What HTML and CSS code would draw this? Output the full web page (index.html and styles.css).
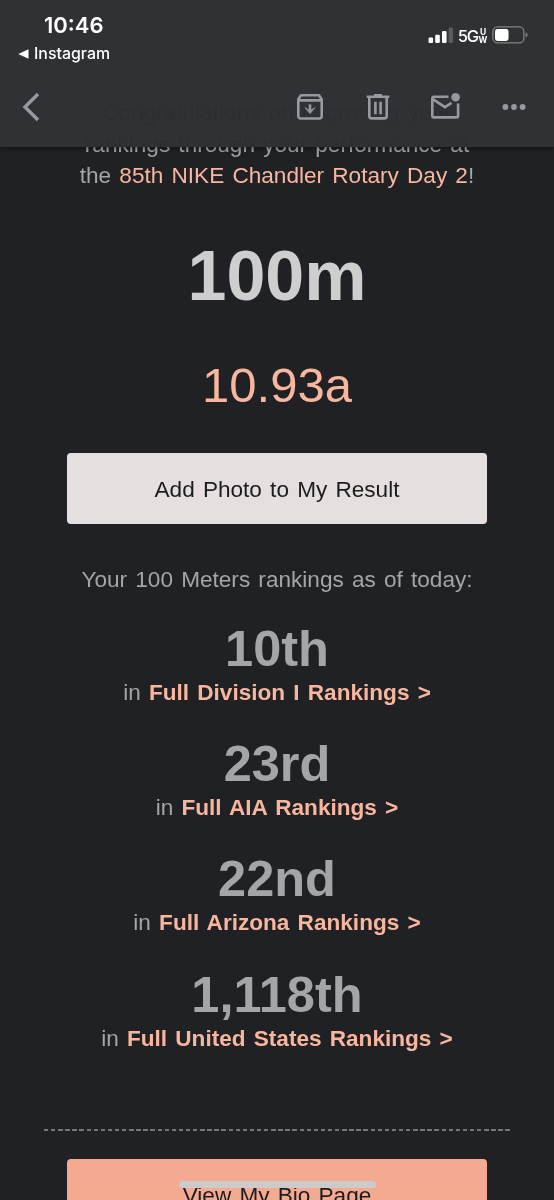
FILE: index.html
```html
<!DOCTYPE html>
<html lang="en">
<head>
    <meta charset="UTF-8">
    <meta name="viewport" content="width=device-width, initial-scale=1.0">
    <title>100m rankings</title>
    <link rel="stylesheet" href="styles.css">
</head>
<body>
    <!-- status bar + mail toolbar -->
    <header class="topbar">
        <div class="status">
            <div class="status_left">
                <div class="clock">10:46</div>
                <div class="back_app">
                    <svg width="11" height="10" viewBox="0 0 11 10"><path d="M0.3 5L10.5 0.2v9.6z" fill="#fff"/></svg>
                    <span>Instagram</span>
                </div>
            </div>
            <div class="status_right">
                <svg width="26" height="17" viewBox="0 0 26 17" fill="#fff">
                    <rect x="0.5" y="10.5" width="4.6" height="5.5" rx="1.2"/>
                    <rect x="7.2" y="7.8" width="4.6" height="8.2" rx="1.2"/>
                    <rect x="14" y="4" width="4.6" height="12" rx="1.2"/>
                    <rect x="20.6" y="0.5" width="4.4" height="15.5" rx="1.2" fill="#5b5c60"/>
                </svg>
                <span class="network">5G</span>
                <span class="uw"><span>U</span><span>W</span></span>
                <svg class="battery" width="36" height="18" viewBox="0 0 36 18">
                    <rect x="0.9" y="0.9" width="31" height="16" rx="4.6" fill="none" stroke="#808184" stroke-width="1.3"/>
                    <rect x="3" y="3" width="13.5" height="12" rx="2.4" fill="#fff"/>
                    <path d="M33.6 6.2q2 .8 2 2.7t-2 2.7z" fill="#808184"/>
                </svg>
            </div>
        </div>
        <nav class="toolbar">
            <svg class="back" width="18" height="30" viewBox="0 0 18 30" fill="none" stroke="#96999e" stroke-width="3.4"><path d="M16 2L3 15l13 13"/></svg>
            <svg class="archive" width="28" height="28" viewBox="0 0 28 28" fill="none" stroke="#96999e" stroke-width="2.6" stroke-linejoin="round">
                <path d="M2.3 6.2L5 2.3h18l2.7 3.9V23q0 2.5-2.5 2.5H4.8q-2.5 0-2.5-2.5zM2.3 7.4h23.4"/>
                <path d="M14 11.3v6" stroke-linejoin="miter"/>
                <path d="M8.8 14.6l5.2 3 5.2-3-5.2 6.2z" fill="#96999e" stroke-width="0.6"/>
            </svg>
            <svg class="trash" width="24" height="28" viewBox="0 0 24 28" fill="none" stroke="#96999e" stroke-width="2.6">
                <path d="M0.7 3.7h22.6M8 2.2h8M3.3 4v19q0 2.4 2.4 2.4h12.6q2.4 0 2.4-2.4V4M9.4 8.8v12.4M14.6 8.8v12.4"/>
            </svg>
            <svg class="mail" width="30" height="28" viewBox="0 0 30 28" fill="none" stroke="#96999e" stroke-width="2.6">
                <path d="M18.5 4.8H4Q2.3 4.8 2.3 6.5v17.2q0 1.7 1.7 1.7h22.4q1.7 0 1.7-1.7V11.5M2.8 7.2l12.2 8 6.5-4.3"/>
                <circle cx="25.6" cy="5.3" r="4.3" fill="#96999e" stroke="none"/>
            </svg>
            <svg class="more" width="24" height="8" viewBox="0 0 24 8" fill="#96999e"><circle cx="3.4" cy="4" r="2.9"/><circle cx="12" cy="4" r="2.9"/><circle cx="20.6" cy="4" r="2.9"/></svg>
        </nav>
    </header>

    <!-- message body, scrolled under the toolbar -->
    <main class="mail_body">
        <p class="intro">Congratulations on improving your<br>rankings through your performance at<br>the <a class="link">85th NIKE Chandler Rotary Day 2</a>!</p>
        <h1 class="event">100m</h1>
        <div class="mark">10.93a</div>
        <a class="btn btn_photo">Add Photo to My Result</a>
        <p class="as_of">Your 100 Meters rankings as of today:</p>

        <div class="rank">
            <h2>10th</h2>
            <p>in <a class="link">Full Division I Rankings &gt;</a></p>
        </div>
        <div class="rank">
            <h2>23rd</h2>
            <p>in <a class="link">Full AIA Rankings &gt;</a></p>
        </div>
        <div class="rank">
            <h2>22nd</h2>
            <p>in <a class="link">Full Arizona Rankings &gt;</a></p>
        </div>
        <div class="rank">
            <h2>1,118th</h2>
            <p>in <a class="link">Full United States Rankings &gt;</a></p>
        </div>

        <div class="divider"></div>
        <a class="btn btn_bio">View My Bio Page</a>
    </main>
    <div class="home_bar"></div>
</body>
</html>
```
FILE: styles.css
```css
*{box-sizing: border-box;}
body{
    margin: 0; height: 1200px; overflow: hidden;
    background-color: #202124; color: #a3a5a8;
    font-family: "Liberation Sans", Arial, sans-serif;
    font-size: 22.6px; line-height: 31.5px; word-spacing: 1.9px;
}
h1, h2, p{margin: 0;}
svg{display: block; flex: none;}

/* top bar lies over the scrolled message */
.topbar{
    position: absolute; top: 0; left: 0; z-index: 2;
    width: 554px; height: 147px;
    background-color: rgba(44, 45, 49, 0.98);
    backdrop-filter: invert(1) blur(0.4px);
    box-shadow: 0 1px 5px rgba(0, 0, 0, 0.5);
    font-family: Inter, sans-serif; color: #fff; word-spacing: 0;
}
.status{display: flex; justify-content: space-between; height: 84px; padding: 12px 26px 0 18px;}
.clock{padding-left: 26px; font-size: 22px; font-weight: 600; line-height: 27px;}
.back_app{display: flex; align-items: center; gap: 5px; margin-top: 4px; font-size: 15.9px; font-weight: 500; line-height: 21px;}
.status_right{display: flex; align-items: flex-start; padding-top: 15px;}
.network{margin-left: 4px; font-size: 16.5px; font-weight: 500; line-height: 19px; letter-spacing: -1.2px;}
.uw{display: flex; flex-direction: column; align-items: center; width: 8px; margin-left: 1px; padding-top: 1px; font-size: 8.5px; font-weight: 700; line-height: 8px;}
.battery{margin-left: 5px; margin-top: -1px;}

.toolbar{display: flex; align-items: center; height: 46px; padding-left: 22px;}
.archive{margin-left: 256px;}
.trash{margin-left: 42px;}
.mail{margin-left: 40px; margin-top: -3px;}
.more{margin-left: 42px;}

/* message */
.mail_body{display: flex; flex-direction: column; align-items: center; padding-top: 97px; text-align: center;}
.intro{white-space: nowrap;}
.link{color: #f9b69e;}
.event{margin-top: 44.5px; font-size: 70px; line-height: 80px; color: #cdcecd;}
.mark{margin-top: 41px; font-size: 49px; line-height: 56px; color: #f9b69e;}
.btn{display: block; width: 420px; height: 71px; border-radius: 4px; line-height: 73px; color: #1c1c1e;}
.btn_photo{margin-top: 40px; background-color: #e6dfdf;}
.as_of{margin: 39.5px 0 26px;}
.rank{height: 115.2px;}
.rank h2{font-size: 50.5px; line-height: 56px;}
.rank .link{font-weight: bold;}
.divider{
    width: 466px; height: 2px; margin-top: 47px;
    background: repeating-linear-gradient(90deg, #77787c 0 4.4px, transparent 4.4px 7.1px);
}
.btn_bio{margin-top: 28px; background-color: #f4a991; line-height: 74px;}

/* home indicator */
.home_bar{position: absolute; left: 179px; top: 1181px; width: 197px; height: 7px; border-radius: 4px; background-color: #cdcbca;}
```
